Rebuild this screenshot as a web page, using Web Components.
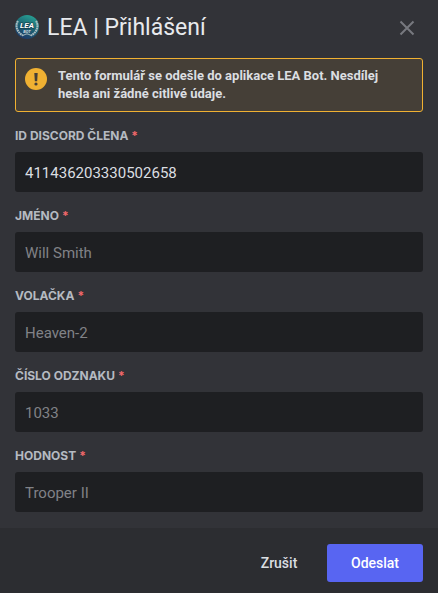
<!DOCTYPE html>
<html lang="cs">
<head>
<meta charset="utf-8">
<meta name="viewport" content="width=device-width, initial-scale=1">
<title>LEA | Přihlášení</title>
<style>
  :root {
    --bg-modal: #323338;
    --bg-footer: #2c2d31;
    --bg-input: #1e1f22;
    --bg-notice: #453f37;
    --color-brand: #5865f2;
    --color-warning: #f0b132;
    --color-required: #f2686b;
    --color-header: #e8eaed;
    --color-text: #dbdee1;
    --color-label: #b5bac1;
    --color-muted: #818287;
    --gutter: 15px;
  }

  body {
    margin: 0;
    min-height: 100vh;
    background: var(--bg-footer);
    color: var(--color-text);
    font-family: Roboto, "Noto Sans", sans-serif;
  }
</style>
</head>
<body>
  <modal-dialog>
    <bot-avatar slot="avatar"></bot-avatar>
    <span slot="title">LEA | Přihlášení</span>
    <warning-notice>Tento formulář se odešle do aplikace LEA Bot. Nesdílej hesla ani žádné citlivé údaje.</warning-notice>
    <form-field name="discord-id" label="ID Discord člena" value="411436203330502658"></form-field>
    <form-field name="jmeno" label="Jméno" placeholder="Will Smith"></form-field>
    <form-field name="volacka" label="Volačka" placeholder="Heaven-2"></form-field>
    <form-field name="odznak" label="Číslo odznaku" placeholder="1033"></form-field>
    <form-field name="hodnost" label="Hodnost" placeholder="Trooper II"></form-field>
    <modal-button slot="actions" look="link">Zrušit</modal-button>
    <modal-button slot="actions">Odeslat</modal-button>
  </modal-dialog>

<script>
(function() {
  const createTemplate = (html) => {
    const template = document.createElement('template');
    template.innerHTML = html;
    return template;
  };

  const attach = (element, template) => {
    const root = element.attachShadow({ mode: 'open', delegatesFocus: true });
    root.appendChild(template.content.cloneNode(true));
    return root;
  };

  const avatarTemplate = createTemplate(`
  <style>
    :host {
      display: block;
      flex: none;
      width: 24px;
      height: 24px;
    }

    svg {
      display: block;
    }
  </style>
  <svg width="24" height="24" viewBox="0 0 24 24" aria-hidden="true">
    <defs>
      <linearGradient id="disc" x1="0.7" y1="0" x2="0.3" y2="1">
        <stop offset="0" stop-color="#28a294"/>
        <stop offset="0.5" stop-color="#1c6273"/>
        <stop offset="1" stop-color="#1d3868"/>
      </linearGradient>
    </defs>
    <circle cx="12" cy="12" r="12" fill="url(#disc)"/>
    <g fill="none" stroke="#a9bcc0">
      <path d="M3 6C0 10 1.500 17 8 20.500M21 6c3 4 1.500 11-5 14.500" stroke-width="2" stroke-dasharray="1.800 .5"/>
      <path d="M8 20.500l3-1.500 2 0 3 1.500" stroke-width="1"/>
    </g>
    <text x="12" y="12.500" text-anchor="middle" fill="#fff" stroke="#123a48" stroke-width="1" paint-order="stroke" font-family="Roboto, sans-serif" font-size="8" font-weight="700" font-style="italic">LEA</text>
    <text x="12" y="18" text-anchor="middle" fill="#d5dfe1" font-family="Roboto, sans-serif" font-size="4" font-weight="700" font-style="italic">BOT</text>
  </svg>
  `);

  class BotAvatar extends HTMLElement {
    constructor() {
      super();
      attach(this, avatarTemplate);
    }
  }

  const noticeTemplate = createTemplate(`
  <style>
    :host {
      display: flex;
      align-items: flex-start;
      gap: 11px;
      padding: 8px 24px 8px 9px;
      border: 1px solid var(--color-warning);
      border-radius: 3px;
      background: var(--bg-notice);
    }

    svg {
      flex: none;
      margin-top: 1px;
    }

    p {
      margin: 0;
      font-size: 13px;
      font-weight: 700;
      line-height: 18px;
    }
  </style>
  <svg width="22" height="22" viewBox="0 0 22 22" aria-hidden="true">
    <circle cx="11" cy="11" r="11" fill="#f0b132"/>
    <path d="M9.300 5h3.400l-.5 8.200H9.800z" fill="#453f37"/>
    <circle cx="11" cy="16" r="1.600" fill="#453f37"/>
  </svg>
  <p><slot></slot></p>
  `);

  class WarningNotice extends HTMLElement {
    constructor() {
      super();
      attach(this, noticeTemplate);
    }
  }

  const fieldTemplate = createTemplate(`
  <style>
    :host {
      display: flex;
      flex-direction: column;
      gap: 8px;
    }

    label {
      color: var(--color-label);
      font-family: Inter, "Noto Sans", sans-serif;
      font-size: 12px;
      font-weight: 700;
      line-height: 16px;
      text-transform: uppercase;
    }

    .required {
      padding-left: 3px;
      color: var(--color-required);
    }

    input {
      box-sizing: border-box;
      width: 100%;
      height: 40px;
      padding: 2px 10px 0;
      border: 0;
      border-radius: 3px;
      outline: none;
      background: var(--bg-input);
      color: var(--color-text);
      font-family: inherit;
      font-size: 15px;
    }

    input::placeholder {
      color: var(--color-muted);
      opacity: 1;
    }
  </style>
  <label for="input"><span class="text"></span><span class="required">*</span></label>
  <input id="input" type="text" required>
  `);

  class FormField extends HTMLElement {
    constructor() {
      super();
      const root = attach(this, fieldTemplate);
      this.labelTag = root.querySelector('.text');
      this.inputTag = root.querySelector('input');
    }

    static get observedAttributes() {
      return ['label', 'name', 'placeholder', 'value'];
    }

    attributeChangedCallback(name, _, newValue) {
      if (name === 'label') {
        this.labelTag.textContent = newValue;
        return;
      }
      this.inputTag[name] = newValue;
    }
  }

  const buttonTemplate = createTemplate(`
  <style>
    :host {
      display: block;
    }

    button {
      display: block;
      min-width: 96px;
      height: 38px;
      padding: 0 16px;
      border: 0;
      border-radius: 3px;
      background: var(--color-brand);
      color: #fff;
      cursor: pointer;
      font-family: inherit;
      font-size: 14px;
      font-weight: 500;
    }

    :host([look="link"]) button {
      background: none;
      color: var(--color-text);
    }
  </style>
  <button type="button"><slot></slot></button>
  `);

  class ModalButton extends HTMLElement {
    constructor() {
      super();
      attach(this, buttonTemplate);
    }
  }

  const dialogTemplate = createTemplate(`
  <style>
    :host {
      display: block;
    }

    header {
      display: flex;
      align-items: center;
      gap: 8px;
      padding: 10px var(--gutter);
      background: var(--bg-modal);
    }

    h1 {
      flex: 1;
      margin: 0;
      padding-top: 2px;
      color: var(--color-header);
      font-size: 23px;
      font-weight: 400;
      line-height: 32px;
    }

    .close {
      display: flex;
      padding: 4px;
      border: 0;
      background: none;
      color: #77797f;
      cursor: pointer;
    }

    main {
      display: flex;
      flex-direction: column;
      gap: 16px;
      padding: 4px var(--gutter) 16px;
      background: var(--bg-modal);
    }

    footer {
      display: flex;
      justify-content: flex-end;
      padding: 16px var(--gutter) 11px;
      background: var(--bg-footer);
    }
  </style>
  <section role="dialog" aria-labelledby="title">
    <header>
      <slot name="avatar"></slot>
      <h1 id="title"><slot name="title"></slot></h1>
      <button class="close" type="button" aria-label="Zavřít">
        <svg width="24" height="24" viewBox="0 0 24 24" aria-hidden="true">
          <path d="M5.500 6.500l13 13M18.500 6.500l-13 13" fill="none" stroke="currentColor" stroke-width="2"/>
        </svg>
      </button>
    </header>
    <main><slot></slot></main>
    <footer><slot name="actions"></slot></footer>
  </section>
  `);

  class ModalDialog extends HTMLElement {
    constructor() {
      super();
      attach(this, dialogTemplate);
    }
  }

  customElements.define('bot-avatar', BotAvatar);
  customElements.define('warning-notice', WarningNotice);
  customElements.define('form-field', FormField);
  customElements.define('modal-button', ModalButton);
  customElements.define('modal-dialog', ModalDialog);
})();
</script>
</body>
</html>
